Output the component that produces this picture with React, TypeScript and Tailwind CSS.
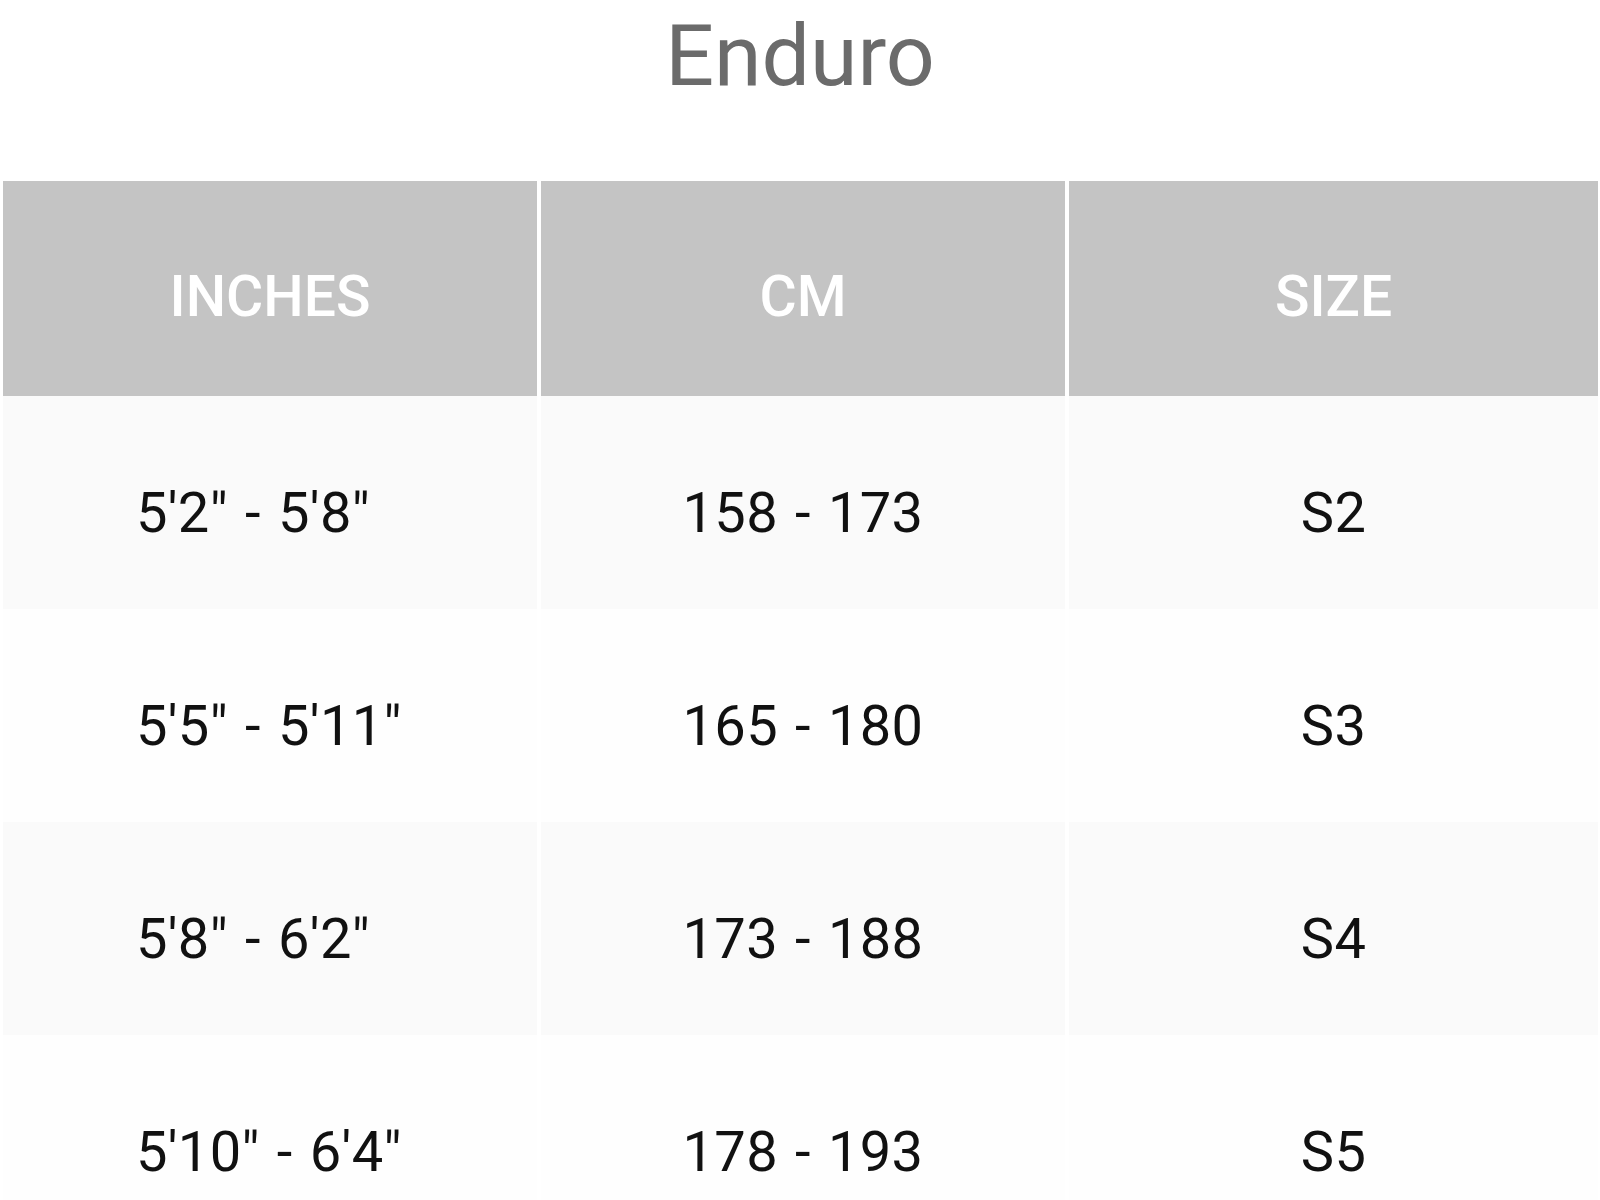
import React from "react";

const rows = [
  ["5'2\" - 5'8\"", "158 - 173", "S2"],
  ["5'5\" - 5'11\"", "165 - 180", "S3"],
  ["5'8\" - 6'2\"", "173 - 188", "S4"],
  ["5'10\" - 6'4\"", "178 - 193", "S5"],
];

export default function App() {
  return (
    <div className="w-[1600px] h-[1200px] overflow-hidden bg-white" style={{ fontFamily: "Roboto, 'Liberation Sans', sans-serif" }}>
      <div className="h-[181px] flex justify-center pt-[13px]">
        <h1 className="text-[86px] leading-none font-normal text-[#6b6b6b]">Enduro</h1>
      </div>
      <div className="ml-[3px] mr-[2px]">
        <div className="grid grid-cols-[534px_524px_1fr] gap-x-[4px] h-[215px]">
          {["INCHES", "CM", "SIZE"].map((h) => (
            <div key={h} className="bg-[#c4c4c4] flex items-center justify-center pt-[16px]">
              <span className="text-white text-[57px] leading-none font-medium">{h}</span>
            </div>
          ))}
        </div>
        {rows.map((r, i) => (
          <div key={i} className="grid grid-cols-[534px_524px_1fr] gap-x-[4px] h-[213px] bg-white">
            {r.map((c, j) => (
              <div
                key={j}
                className={`${i % 2 === 0 ? "bg-[#fafafa]" : "bg-[#fefefe]"} flex items-center pt-[21px] ${j === 0 ? "justify-start pl-[133px]" : "justify-center"}`}
              >
                <span className="text-[#111111] text-[56px] leading-none font-normal [word-spacing:3px] tracking-[0.3px]">{c}</span>
              </div>
            ))}
          </div>
        ))}
      </div>
    </div>
  );
}
